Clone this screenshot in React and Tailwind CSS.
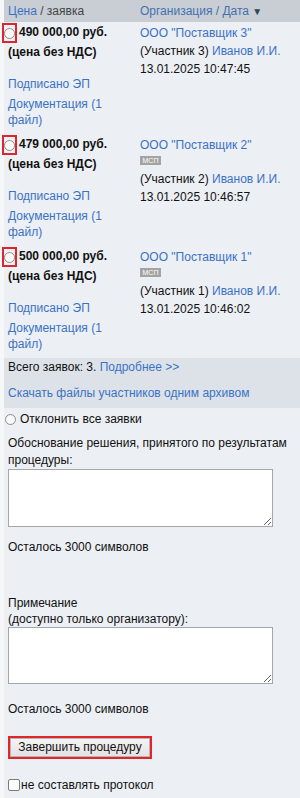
import React from "react";

const LINK = "text-[#3a72c6]";

function Radio({ boxed }) {
  const circle = (
    <span className="inline-block w-[11px] h-[11px] rounded-full border border-[#8c8c8c] bg-[#fafafa]" />
  );
  if (boxed) {
    return (
      <span className="inline-flex items-center justify-center align-top w-[15px] h-[20px] border-2 border-[#e0252b] ml-[-6px] mr-[2px]">
        {circle}
      </span>
    );
  }
  return circle;
}

function Bid({ price, org, n, date, msp }) {
  return (
    <div className="flex h-[112px]">
      <div className="w-[132px] pl-[4px] pt-[1px]">
        <div className="font-bold leading-[19px] text-[#111]">
          <Radio boxed />
          {price}
          <br />
          (цена без НДС)
        </div>
        <div className={`mt-[14px] leading-[16px] ${LINK}`}>Подписано ЭП</div>
        <div className={`mt-[4px] leading-[16px] ${LINK}`}>
          Документация (1
          <br />
          файл)
        </div>
      </div>
      <div className="flex-1 pl-[4px] pt-[2px] leading-[18px]">
        <div className={LINK}>ООО "{org}"</div>
        {msp && (
          <div className="mt-[2px] mb-[5px] h-[9px] w-[21px] bg-[#a3a3a3] text-white text-[7px] leading-[9px] text-center">
            МСП
          </div>
        )}
        <div className="text-[#111]">
          (Участник {n}) <span className={LINK}>Иванов И.И.</span>
        </div>
        <div className="text-[#111]">{date}</div>
      </div>
    </div>
  );
}

export default function App() {
  return (
    <div
      className="w-[300px] min-h-[798px] bg-[#f6f7f9] pl-[4px] text-[12px] text-[#111]"
      style={{ fontFamily: '"Liberation Sans", Arial, sans-serif' }}
    >
      <div className="bg-[#eceff3] min-h-[798px]">
        <div className="flex h-[22px] items-center bg-[#c9ced5]">
          <div className="w-[132px] pl-[4px]">
            <span className={LINK}>Цена</span>
            <span className="text-[#444]"> / заявка</span>
          </div>
          <div className="flex-1 pl-[4px] text-[#4471b0]">
            Организация / Дата <span className="text-[#2b4a57] text-[10px]">▼</span>
          </div>
        </div>

        <Bid price="490 000,00 руб." org="Поставщик 3" n={3} date="13.01.2025 10:47:45" />
        <Bid price="479 000,00 руб." org="Поставщик 2" n={2} date="13.01.2025 10:46:57" msp />
        <Bid price="500 000,00 руб." org="Поставщик 1" n={1} date="13.01.2025 10:46:02" msp />

        <div className="bg-[#dde2e8] px-[4px] pb-[6px] leading-[18px]">
          <div>
            Всего заявок: 3. <span className={LINK}>Подробнее &gt;&gt;</span>
          </div>
          <div className={`mt-[8px] ${LINK}`}>Скачать файлы участников одним архивом</div>
        </div>

        <div className="px-[4px]">
          <div className="mt-[2px] flex items-center h-[18px] ml-[-3px] gap-[4px]">
            <Radio />
            <span>Отклонить все заявки</span>
          </div>
          <div className="mt-[7px] leading-[17px]">
            Обоснование решения, принятого по результатам
            <br />
            процедуры:
          </div>
          <textarea className="block w-[265px] h-[58px] bg-white border border-[#a6a6a6] resize outline-none" />
          <div className="mt-[11px] leading-[18px]">Осталось 3000 символов</div>

          <div className="mt-[39px] leading-[16px]">
            Примечание
            <br />
            (доступно только организатору):
          </div>
          <textarea className="block w-[265px] h-[57px] bg-white border border-[#a6a6a6] resize outline-none" />
          <div className="mt-[16px] leading-[18px]">Осталось 3000 символов</div>

          <div className="mt-[18px] w-[144px] h-[23px] border-2 border-[#e0252b]">
            <button className="w-full h-full bg-gradient-to-b from-[#f4f4f4] to-[#e3e3e3] border border-[#b5b5b5] text-[12px] text-[#111] leading-[17px]">
              Завершить процедуру
            </button>
          </div>

          <div className="mt-[17px] flex items-center h-[18px] gap-[1px]">
            <span className="inline-block w-[12px] h-[12px] border border-[#7a7a7a] rounded-[2px] bg-white" />
            <span>не составлять протокол</span>
          </div>
        </div>
      </div>
    </div>
  );
}
